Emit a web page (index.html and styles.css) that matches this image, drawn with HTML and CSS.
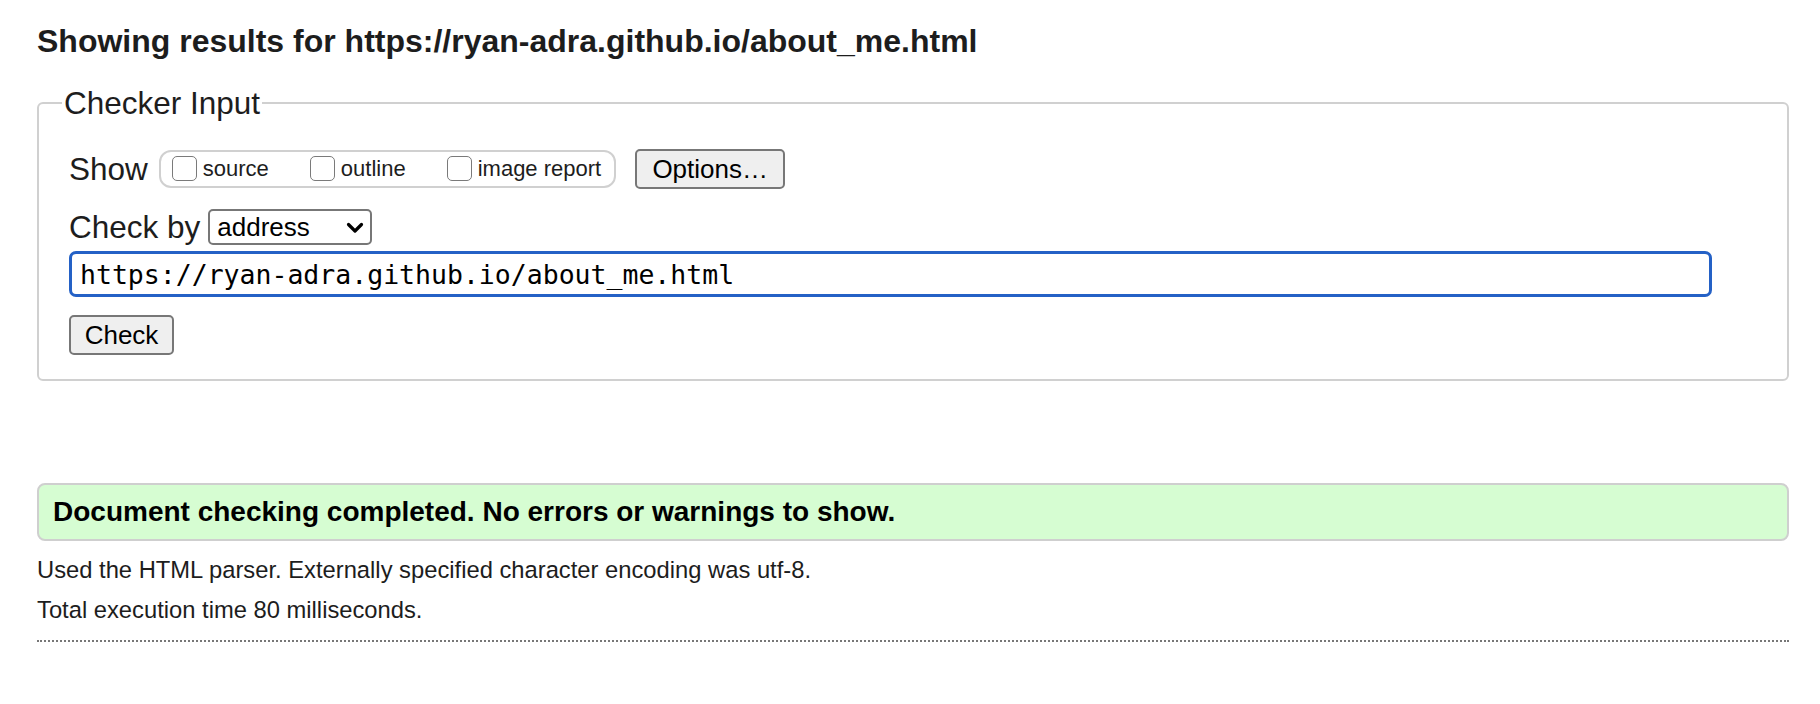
FILE: index.html
```html
<!DOCTYPE html>
<html lang="en">
<head>
<meta charset="utf-8">
<title>Showing results for https://ryan-adra.github.io/about_me.html</title>
<link rel="stylesheet" href="styles.css">
</head>
<body>
<h2 class="heading">Showing results for https://ryan-adra.github.io/about_me.html</h2>
<form class="checker">
  <fieldset class="checker-fieldset">
    <legend class="checker-legend">Checker Input</legend>
    <div class="row show-row">
      <span class="row-label">Show</span>
      <div class="opts">
        <label class="opt"><input type="checkbox" class="cb"><span>source</span></label>
        <label class="opt"><input type="checkbox" class="cb"><span>outline</span></label>
        <label class="opt"><input type="checkbox" class="cb"><span>image report</span></label>
      </div>
      <button type="button" class="btn btn-options">Options…</button>
    </div>
    <div class="row by-row">
      <span class="row-label">Check by</span>
      <span class="select-wrap">
        <select class="select"><option>address</option></select>
        <svg class="chev" width="18" height="12" viewBox="0 0 18 12" aria-hidden="true"><path d="M2.5 2.5 L9 9 L15.5 2.5" fill="none" stroke="#000" stroke-width="3.2" stroke-linecap="round" stroke-linejoin="round"/></svg>
      </span>
    </div>
    <input class="url" type="text" value="https://ryan-adra.github.io/about_me.html">
    <div class="row check-row">
      <button type="button" class="btn btn-check">Check</button>
    </div>
  </fieldset>
</form>
<p class="success">Document checking completed. No errors or warnings to show.</p>
<p class="details first">Used the HTML parser. Externally specified character encoding was utf-8.</p>
<p class="details">Total execution time 80 milliseconds.</p>
<hr class="sep">
</body>
</html>
```
FILE: styles.css
```css
html, body {
  background: #fff;
}
body {
  margin: 0;
  padding: 23px 31px 40px 37px;
  font-family: "Liberation Sans", Arial, sans-serif;
  color: #222;
}
.heading {
  margin: 0 0 26px 0;
  font-size: 32px;
  line-height: 36px;
  font-weight: bold;
  color: #1d1d1d;
}
.checker {
  margin: 0;
}
.checker-fieldset {
  margin: 0;
  border: 2px solid #d0d0d0;
  border-radius: 6px;
  padding: 28px 31px 24px 30px;
  min-inline-size: 0;
}
.checker-legend {
  margin-left: -7px;
  padding: 0 2px;
  font-size: 31.5px;
  line-height: 36px;
  color: #1d1d1d;
}
.row {
  display: flex;
  align-items: center;
}
.row-label {
  font-size: 31.5px;
  line-height: 36px;
  color: #1d1d1d;
}
.show-row {
  height: 40px;
}
.show-row .row-label {
  margin-right: 11px;
}
.opts {
  box-sizing: border-box;
  height: 38px;
  display: flex;
  align-items: center;
  gap: 41px;
  padding: 5px 13px 0 11px;
  border: 2px solid #d0d0d0;
  border-radius: 12px;
}
.opt {
  display: flex;
  align-items: baseline;
  font-size: 22px;
  line-height: 26px;
  color: #1d1d1d;
}
.cb {
  appearance: none;
  -webkit-appearance: none;
  box-sizing: border-box;
  width: 25px;
  height: 25px;
  margin: 0 6px 6px 0;
  border: 1.5px solid #7a7a7a;
  border-radius: 5px;
  background: #fff;
  align-self: flex-end;
}
.btn {
  box-sizing: border-box;
  font-family: "Liberation Sans", Arial, sans-serif;
  font-size: 26px;
  color: #000;
  background: #efefef;
  border: 2px solid #777;
  border-radius: 5px;
  padding: 0;
  height: 40px;
}
.btn-options {
  margin-left: 19px;
  width: 150px;
}
.btn-check {
  width: 105px;
}
.by-row {
  margin-top: 20px;
  height: 36px;
}
.by-row .row-label {
  margin-right: 8px;
}
.select-wrap {
  position: relative;
  display: inline-block;
}
.select {
  appearance: none;
  -webkit-appearance: none;
  box-sizing: border-box;
  width: 164px;
  height: 36px;
  font-family: "Liberation Sans", Arial, sans-serif;
  font-size: 26px;
  color: #000;
  background: #fff;
  border: 2px solid #777;
  border-radius: 5px;
  padding: 0 0 0 7px;
  display: block;
}
.chev {
  position: absolute;
  right: 8px;
  top: 13px;
  pointer-events: none;
}
.url {
  display: block;
  box-sizing: border-box;
  margin-top: 6px;
  width: 1643px;
  height: 46px;
  border: 3px solid #2461c6;
  border-radius: 7px;
  padding: 0 8px 0 8px;
  font-family: "DejaVu Sans Mono", "Liberation Mono", monospace;
  font-size: 26.5px;
  color: #000;
  outline: none;
}
.check-row {
  margin-top: 18px;
}
.success {
  box-sizing: border-box;
  margin: 102px 0 0 0;
  height: 58px;
  display: flex;
  align-items: center;
  padding: 0 14px;
  background: #d6fdd2;
  border: 2px solid #cfcfcf;
  border-radius: 8px;
  font-size: 28px;
  font-weight: bold;
  color: #000;
}
.details {
  margin: 13px 0 0 0;
  font-size: 23.75px;
  line-height: 27px;
  color: #1d1d1d;
}
.details.first {
  margin-top: 15px;
}
.sep {
  margin: 17px 0 0 0;
  border: 0;
  border-top: 2px dotted #777;
  height: 0;
}
```
